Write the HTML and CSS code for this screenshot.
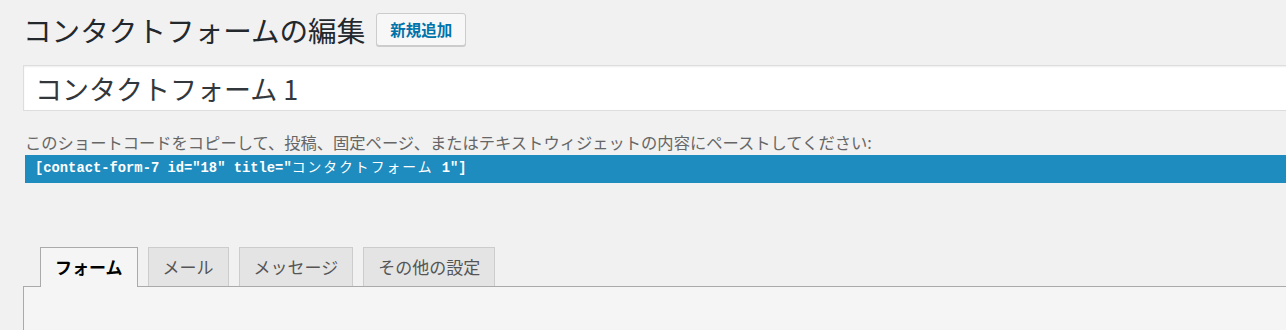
FILE: index.html
```html
<!DOCTYPE html>
<html lang="ja">
<head>
  <meta charset="UTF-8">
  <meta name="viewport" content="width=device-width, initial-scale=1.0">
  <title>コンタクトフォームの編集</title>
  <link rel="stylesheet" href="styles.css">
</head>
<body>
  <div class="wrap">
    <div class="page-head">
      <h1 class="page-title">コンタクトフォームの編集</h1>
      <a class="add-new" href="#">新規追加</a>
    </div>
    <input class="title-input" type="text" value="コンタクトフォーム 1">
    <p class="shortcode-note">このショートコードをコピーして、投稿、固定ページ、またはテキストウィジェットの内容にペーストしてください:</p>
    <div class="shortcode">[contact-form-7 id="18" title="<span class="wide">コンタクトフォーム</span> 1"]</div>

    <div class="tabs">
      <div class="tab active">フォーム</div>
      <div class="tab">メール</div>
      <div class="tab">メッセージ</div>
      <div class="tab">その他の設定</div>
    </div>
    <div class="panel"></div>
  </div>
</body>
</html>
```

FILE: styles.css
```css
html {
  overflow: hidden;
}
body {
  margin: 0;
  background: #f1f1f1;
  color: #444;
  font-family: "Noto Sans CJK JP", "Noto Sans", sans-serif;
}
.wrap {
  width: 1300px;
  padding-left: 23px;
}
/* Heading row */
.page-head {
  display: flex;
  align-items: center;
  margin-top: 13px;
  height: 33px;
}
.page-title {
  margin: 0 11px 0 0;
  font-size: 28.6px;
  font-weight: 400;
  line-height: 33px;
  color: #23282d;
}
.add-new {
  display: inline-block;
  box-sizing: border-box;
  height: 33px;
  padding: 0 13px;
  line-height: 31px;
  font-size: 15.5px;
  font-weight: 700;
  color: #0073aa;
  text-decoration: none;
  background: #f7f7f7;
  border: 1px solid #ccc;
  border-radius: 3px;
  box-shadow: 0 1px 0 #ccc;
}
/* Title field */
.title-input {
  display: block;
  box-sizing: border-box;
  width: 100%;
  height: 46px;
  margin: 19px 0 0 0;
  padding: 0 11px;
  font-family: inherit;
  font-size: 27px;
  color: #32373c;
  background: #fff;
  border: 1px solid #ddd;
  box-shadow: inset 0 1px 2px rgba(0,0,0,0.07);
  outline: none;
}
.shortcode-note {
  margin: 21px 0 0 2px;
  font-size: 16.3px;
  line-height: 20px;
  color: #666;
}
.shortcode {
  box-sizing: border-box;
  height: 28px;
  margin: 3px 0 0 2px;
  padding-left: 10px;
  line-height: 28px;
  font-family: "Liberation Mono", "Noto Sans CJK JP", monospace;
  font-size: 13.8px;
  font-weight: 700;
  color: #fff;
  background: #1e8cbe;
}
.shortcode .wide {
  font-weight: 400;
  letter-spacing: 2px;
}
/* Tabs */
.tabs {
  display: flex;
  align-items: flex-end;
  gap: 10px;
  margin-top: 64px;
  padding-left: 17px;
}
.tab {
  box-sizing: border-box;
  height: 39px;
  padding: 0 14px;
  line-height: 37px;
  font-size: 17px;
  color: #555;
  background: #e4e4e4;
  border: 1px solid #ccc;
  border-bottom: none;
}
.tab.active {
  position: relative;
  z-index: 1;
  height: 40px;
  margin-bottom: -1px;
  color: #000;
  font-weight: 700;
  background: #f5f5f5;
  border-color: #aaa;
}
.panel {
  height: 43px;
  background: #f5f5f5;
  border-top: 1px solid #aaa;
  border-left: 1px solid #aaa;
}
```
